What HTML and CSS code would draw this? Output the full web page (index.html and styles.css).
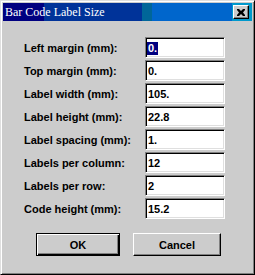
FILE: index.html
```html
<!DOCTYPE html>
<html>
<head>
<meta charset="utf-8">
<link rel="stylesheet" href="styles.css">
</head>
<body>
<div class="window">
  <div class="titlebar">
    <span class="title">Bar Code Label Size</span>
    <span class="close"><svg width="8" height="7" viewBox="0 0 8 7"><path d="M0 0h2l2 2 2-2h2v1l-2 2.5 2 2.5v1h-2l-2-2-2 2h-2v-1l2-2.5-2-2.5z" fill="#000"/></svg></span>
  </div>
  <div class="content">
    <div class="form">
      <div class="lbl">Left margin (mm):</div><div class="field"><span class="sel">0.</span></div>
      <div class="lbl">Top margin (mm):</div><div class="field">0.</div>
      <div class="lbl">Label width (mm):</div><div class="field">105.</div>
      <div class="lbl">Label height (mm):</div><div class="field">22.8</div>
      <div class="lbl">Label spacing (mm):</div><div class="field">1.</div>
      <div class="lbl">Labels per column:</div><div class="field">12</div>
      <div class="lbl">Labels per row:</div><div class="field">2</div>
      <div class="lbl">Code height (mm):</div><div class="field">15.2</div>
    </div>
    <div class="buttons">
      <div class="btn btn-default"><span>OK</span></div>
      <div class="btn btn-cancel"><span>Cancel</span></div>
    </div>
  </div>
</div>
</body>
</html>
```
FILE: styles.css
```css
html, body {
  margin: 0;
  padding: 0;
  background: #cccccc;
}
.window {
  width: 255px;
  height: 275px;
  box-sizing: border-box;
  background: #cccccc;
  border-style: solid;
  border-width: 1px;
  border-color: #dfdfdf #000000 #000000 #dfdfdf;
  box-shadow: inset 1px 1px #ffffff, inset -1px -1px #808080;
  padding: 2px;
  font-family: "Liberation Sans", Arial, sans-serif;
  font-weight: bold;
  font-size: 11px;
  color: #000;
}
.titlebar {
  height: 18px;
  display: flex;
  align-items: center;
  justify-content: space-between;
  background: linear-gradient(to right,
    #000080 0, #000080 41px,
    #003399 41px, #003399 139px,
    #006699 139px, #006699 149px,
    #0066cc 149px, #0066cc 229px,
    #0099cc 229px, #0099cc 100%);
}
.title {
  font-family: "Liberation Serif", "Times New Roman", serif;
  font-weight: normal;
  font-size: 12px;
  color: #ffffff;
  padding-left: 2px;
  line-height: 18px;
}
.close {
  width: 16px;
  height: 14px;
  box-sizing: border-box;
  margin-right: 3px;
  background: #cccccc;
  border-style: solid;
  border-width: 1px;
  border-color: #ffffff #000000 #000000 #ffffff;
  box-shadow: inset -1px -1px #808080;
  display: flex;
  align-items: center;
  justify-content: center;
}
.close svg {
  display: block;
  margin-left: -1px;
}
.content {
  padding: 16px 0 0 21px;
}
.form {
  display: grid;
  grid-template-columns: 121px 80px;
  grid-auto-rows: 21px;
  row-gap: 2px;
}
.lbl {
  display: flex;
  align-items: center;
  white-space: nowrap;
  padding-top: 1px;
}
.field {
  box-sizing: border-box;
  background: #ffffff;
  border-style: solid;
  border-width: 1px;
  border-color: #808080 #ffffff #ffffff #808080;
  box-shadow: inset 1px 1px #000000, inset -1px -1px #dfdfdf;
  padding: 1px 0 0 2px;
  display: flex;
  align-items: center;
}
.sel {
  background: #000080;
  color: #ffffff;
  line-height: 13px;
  padding: 0 1px;
  margin-left: -1px;
}
.buttons {
  display: flex;
  gap: 13px;
  margin-top: 14px;
  padding-left: 12px;
}
.btn {
  height: 23px;
  box-sizing: border-box;
  display: flex;
  align-items: center;
  justify-content: center;
  background: #cccccc;
  border-style: solid;
  border-width: 1px;
  border-color: #ffffff #000000 #000000 #ffffff;
  box-shadow: inset -1px -1px #808080;
  padding-top: 1px;
}
.btn-default {
  width: 84px;
  border-color: #000000;
  box-shadow: inset 1px 1px #ffffff, inset -1px -1px #000000, inset -2px -2px #808080;
}
.btn-cancel {
  width: 88px;
}
```
